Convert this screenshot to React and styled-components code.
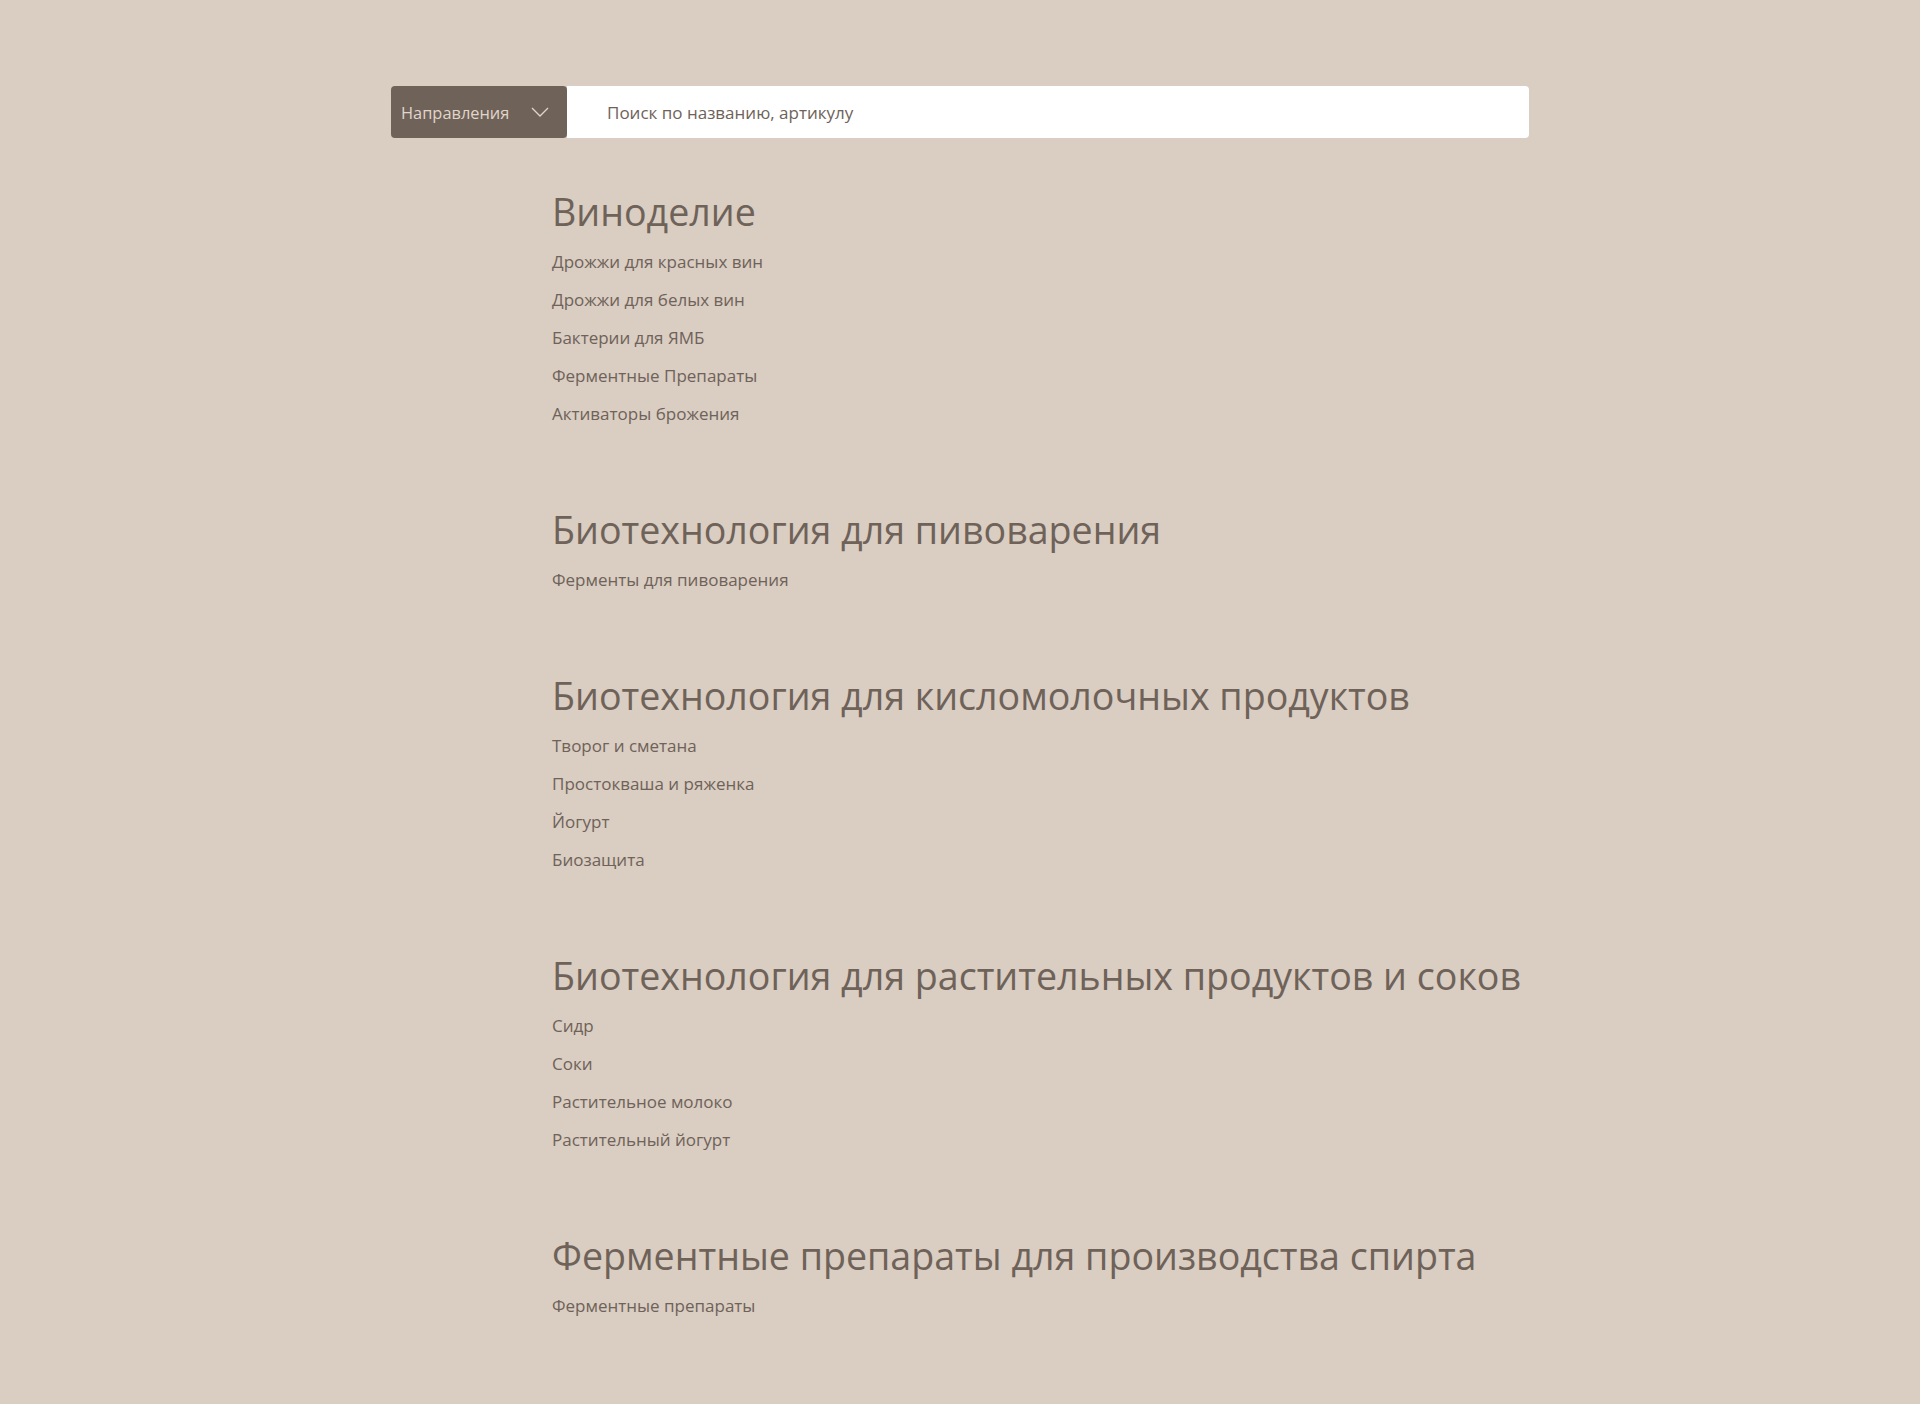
import styled, { createGlobalStyle } from "styled-components";

const GlobalStyle = createGlobalStyle`
  html, body {
    margin: 0;
    padding: 0;
    background-color: #dacdc2;
  }
  body {
    font-family: "Open Sans", "Noto Sans", sans-serif;
    color: #6e6259;
  }
`;

const Page = styled.div`
  min-height: 1404px;
  background-color: #dacdc2;
`;

const Container = styled.div`
  width: 1138px;
  margin: 0 auto;
  padding-top: 86px;
`;

const SearchRow = styled.div`
  display: flex;
  height: 52px;
`;

const DirButton = styled.button`
  display: flex;
  align-items: center;
  justify-content: space-between;
  width: 176px;
  padding: 0 18px 0 10px;
  border: none;
  border-radius: 4px;
  background-color: #6f6259;
  color: #e0d5cb;
  font-family: inherit;
  font-size: 16.4px;
  cursor: pointer;
`;

const SearchInput = styled.input`
  flex: 1;
  border: none;
  border-radius: 0 4px 4px 0;
  background: #fff;
  padding: 0 0 0 40px;
  font-family: inherit;
  font-size: 17px;
  color: #6e6259;
  outline: none;

  &::placeholder {
    color: #6e6259;
  }
`;

const Catalog = styled.div`
  display: flex;
  flex-direction: column;
  gap: 75px;
  margin-top: 52px;
  padding-left: 161px;
`;

const Section = styled.section`
  display: flex;
  flex-direction: column;
`;

const Heading = styled.h2`
  margin: 0 0 9px;
  font-size: 37.6px;
  line-height: 44px;
  font-weight: 400;
  color: #6e6259;
`;

const List = styled.ul`
  list-style: none;
  margin: 0;
  padding: 0;
`;

const Item = styled.li`
  font-size: 17px;
  line-height: 38px;
  color: #6e6259;
`;

const Chevron = () => (
  <svg width="18" height="10" viewBox="0 0 18 10" fill="none">
    <path d="M1 1l8 8 8-8" stroke="#e0d5cb" strokeWidth="1.3" />
  </svg>
);

const sections = [
  {
    title: "Виноделие",
    items: [
      "Дрожжи для красных вин",
      "Дрожжи для белых вин",
      "Бактерии для ЯМБ",
      "Ферментные Препараты",
      "Активаторы брожения",
    ],
  },
  {
    title: "Биотехнология для пивоварения",
    items: ["Ферменты для пивоварения"],
  },
  {
    title: "Биотехнология для кисломолочных продуктов",
    items: ["Творог и сметана", "Простокваша и ряженка", "Йогурт", "Биозащита"],
  },
  {
    title: "Биотехнология для растительных продуктов и соков",
    items: ["Сидр", "Соки", "Растительное молоко", "Растительный йогурт"],
  },
  {
    title: "Ферментные препараты для производства спирта",
    items: ["Ферментные препараты"],
  },
];

export default function App() {
  return (
    <Page>
      <GlobalStyle />
      <Container>
        <SearchRow>
          <DirButton>
            Направления
            <Chevron />
          </DirButton>
          <SearchInput placeholder="Поиск по названию, артикулу" />
        </SearchRow>
        <Catalog>
          {sections.map((s) => (
            <Section key={s.title}>
              <Heading>{s.title}</Heading>
              <List>
                {s.items.map((i) => (
                  <Item key={i}>{i}</Item>
                ))}
              </List>
            </Section>
          ))}
        </Catalog>
      </Container>
    </Page>
  );
}
